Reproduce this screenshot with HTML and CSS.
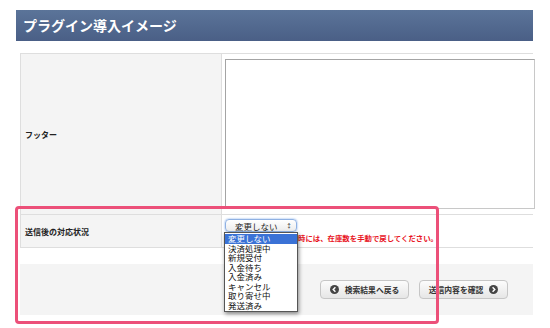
FILE: index.html
```html
<!DOCTYPE HTML><html>
<head>
	<meta name="viewport" charset="UTF-8" content="width=device-width, initial-scale=1">
	<title>プラグイン導入イメージ</title>
	<link rel="stylesheet" href="styles.css">
</head>
<body>
	<div class="page">
		<h1 class="title">プラグイン導入イメージ</h1>
		<div class="content">
			<table class="form">
				<tr class="row-footer">
					<th>フッター</th>
					<td><textarea class="footer-text"></textarea></td>
				</tr>
				<tr class="row-status">
					<th>送信後の対応状況</th>
					<td>
						<div class="select"><span>変更しない</span><span class="arrows">&#x2195;</span></div>
						<p class="note">時には、在庫数を手動で戻してください。</p>
					</td>
				</tr>
			</table>
			<div class="actions">
				<span class="btn"><i class="ico">
					<svg width="9" height="9" viewBox="0 0 10 10"><circle cx="5" cy="5" r="5" fill="#454545"/><path d="M6 2.6 3.6 5 6 7.4" fill="none" stroke="#fff" stroke-width="1.6"/></svg>
				</i>検索結果へ戻る</span>
				<span class="btn">送信内容を確認<i class="ico">
					<svg width="9" height="9" viewBox="0 0 10 10"><circle cx="5" cy="5" r="5" fill="#454545"/><path d="M4 2.6 6.4 5 4 7.4" fill="none" stroke="#fff" stroke-width="1.6"/></svg>
				</i></span>
			</div>
		</div>
		<ul class="dropdown">
			<li class="on">変更しない</li>
			<li>決済処理中</li>
			<li>新規受付</li>
			<li>入金待ち</li>
			<li>入金済み</li>
			<li>キャンセル</li>
			<li>取り寄せ中</li>
			<li>発送済み</li>
		</ul>
		<div class="highlight"></div>
	</div>
</body>
</html>
```

FILE: styles.css
```css
html {
	font-family: "Noto Sans CJK JP", "DejaVu Sans", sans-serif;}
body {
	background-color: #fff;
	margin: 0;
	color: #222;}
.page {
	position: relative;
	width: 550px;
	height: 328px;
	overflow: hidden;
}
.title {
	margin: 10px 17px 0 16px;
	height: 31px;
	padding: 0 7px;
	background: linear-gradient(#5b7499, #4a5f86);
	color: #fff;
	font-size: 14px;
	font-weight: bold;
	line-height: 30px;
}
.content {
	margin: 12px 17px 0 20px;
}
.form {
	width: 100%;
	table-layout: fixed;
	border-collapse: collapse;
	border-top: 1px solid #dedede;
}
.form th {
	width: 192px;
	background-color: #f4f4f4;
	border-left: 1px solid #dedede;
	border-right: 1px solid #dedede;
	border-bottom: 1px solid #dedede;
	padding: 0 4px;
	font-size: 8px;
	font-weight: bold;
	text-align: left;
	color: #222;
}
.form td {
	padding: 5px 0 5px 3px;
	border-bottom: 1px solid #dedede;
	vertical-align: top;
}
.footer-text {
	display: block;
	box-sizing: border-box;
	width: 310px;
	height: 150px;
	margin: 0;
	border: 1px solid #c8c8c8;
	border-top-color: #a4a4a4;
	border-left-color: #a4a4a4;
	resize: none;
}
.row-status td {
	padding-top: 4px;
	padding-bottom: 4px;
}
.select {
	box-sizing: border-box;
	width: 72px;
	height: 13px;
	display: flex;
	justify-content: space-between;
	align-items: center;
	padding: 0 4px 0 9px;
	border: 1px solid #8fb1e3;
	border-radius: 4px;
	box-shadow: 0 0 2px #6d9de4;
	background: linear-gradient(#fff, #ececec);
	font-size: 8.5px;
	line-height: 10px;
}
.arrows {
	font-size: 6px;
}
.note {
	margin: 0 0 0 73px;
	color: #e8141e;
	font-size: 7.4px;
	font-weight: bold;
	line-height: 11px;
}
.actions {
	margin-top: 16px;
	height: 51px;
	background-color: #f4f4f4;
	display: flex;
	justify-content: flex-end;
	align-items: center;
	gap: 10px;
	padding-right: 25px;
}
.btn {
	box-sizing: border-box;
	width: 89px;
	height: 19px;
	display: flex;
	justify-content: center;
	align-items: center;
	gap: 6px;
	border: 1px solid #c6c6c6;
	border-radius: 4px;
	background: linear-gradient(#fcfcfc, #e6e6e6);
	font-size: 7.8px;
	font-weight: bold;
	color: #333;
}
.ico {
	display: flex;
}
.dropdown {
	position: absolute;
	left: 224px;
	top: 232px;
	width: 72px;
	margin: 0;
	padding: 1px 0;
	list-style: none;
	background-color: #fff;
	border: 1px solid #555;
	box-shadow: 1px 2px 4px rgba(0, 0, 0, 0.45);
	font-size: 8.5px;
	line-height: 9.5px;
	color: #111;
}
.dropdown li {
	padding-left: 3px;
}
.dropdown li.on {
	background-color: #3a72d6;
	color: #fff;
}
.highlight {
	position: absolute;
	left: 15px;
	top: 206px;
	width: 418px;
	height: 112px;
	border: 3px solid #ec5079;
	border-radius: 4px;
}
```
